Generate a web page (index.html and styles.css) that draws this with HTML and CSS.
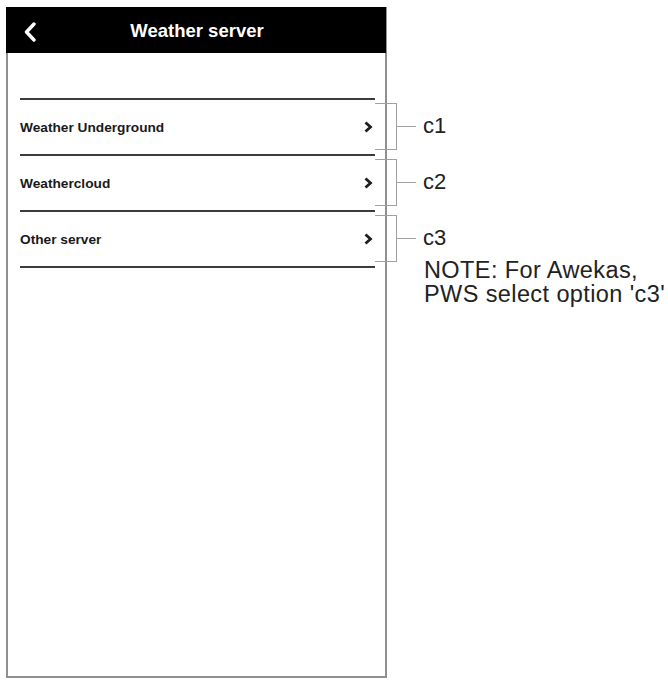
FILE: index.html
```html
<!DOCTYPE html>
<html>
<head>
<meta charset="utf-8">
<link rel="stylesheet" href="styles.css">
</head>
<body>
<div class="page">
  <div class="phone">
    <div class="header">
      <div class="back">
        <svg width="14" height="20" viewBox="0 0 14 20"><path d="M11 2 L3.5 10 L11 18" fill="none" stroke="#fff" stroke-width="3.4" stroke-linecap="round" stroke-linejoin="round"/></svg>
      </div>
      <div class="title">Weather server</div>
      <div></div>
    </div>
    <div class="list">
      <div class="row"><span>Weather Underground</span><svg class="chev" width="10" height="12" viewBox="0 0 10 12"><path d="M2.5 1.5 L7.5 6 L2.5 10.5" fill="none" stroke="#1e1e1e" stroke-width="2.8"/></svg></div>
      <div class="row"><span>Weathercloud</span><svg class="chev" width="10" height="12" viewBox="0 0 10 12"><path d="M2.5 1.5 L7.5 6 L2.5 10.5" fill="none" stroke="#1e1e1e" stroke-width="2.8"/></svg></div>
      <div class="row"><span>Other server</span><svg class="chev" width="10" height="12" viewBox="0 0 10 12"><path d="M2.5 1.5 L7.5 6 L2.5 10.5" fill="none" stroke="#1e1e1e" stroke-width="2.8"/></svg></div>
    </div>
  </div>
  <div class="notes">
    <div class="ann"><div class="bracket"></div><div class="tick"></div><div class="label">c1</div></div>
    <div class="ann"><div class="bracket"></div><div class="tick"></div><div class="label">c2</div></div>
    <div class="ann"><div class="bracket"></div><div class="tick"></div><div class="label">c3</div></div>
    <div class="note">NOTE: For Awekas,<br>PWS select option 'c3'</div>
  </div>
</div>
</body>
</html>
```

FILE: styles.css
```css
html, body {
  margin: 0;
  padding: 0;
  background: #fff;
}
body {
  font-family: "Liberation Sans", Arial, sans-serif;
  color: #1a1a1a;
}
.page {
  display: flex;
  align-items: flex-start;
  padding: 7px 0 0 6px;
}
.phone {
  width: 381px;
  height: 671px;
  box-sizing: border-box;
  border: 2px solid #909090;
  border-top: 0;
  flex: none;
  background: #fff;
}
.header {
  height: 46px;
  background: #000;
  margin: 0 -1px 0 -2px;
  display: grid;
  grid-template-columns: 1fr auto 1fr;
  align-items: center;
}
.back {
  padding-left: 17px;
  padding-top: 4px;
  display: flex;
  align-items: center;
}
.title {
  color: #fff;
  font-weight: bold;
  font-size: 18.5px;
  padding-top: 2px;
  padding-left: 2px;
}
.list {
  margin: 45px 10px 0 12px;
  border-bottom: 2px solid #3c3c3c;
}
.row {
  height: 56px;
  box-sizing: border-box;
  border-top: 2px solid #3c3c3c;
  display: flex;
  align-items: center;
  justify-content: space-between;
  padding-right: 2px;
  font-weight: bold;
  font-size: 13.7px;
}
.notes {
  margin-left: -12px;
  padding-top: 91px;
  display: flex;
  flex-direction: column;
}
.ann {
  height: 56px;
  display: flex;
  align-items: center;
}
.bracket {
  width: 22px;
  height: 47px;
  box-sizing: border-box;
  border: 1px solid #a0a0a0;
  border-left: 0;
}
.tick {
  width: 19px;
  height: 1px;
  background: #a0a0a0;
}
.label {
  margin-left: 7px;
  font-size: 22px;
  line-height: 24px;
  color: #222;
}
.note {
  margin: -8px 0 0 49px;
  font-size: 23.5px;
  letter-spacing: 0.4px;
  line-height: 24px;
  color: #222;
  white-space: nowrap;
}
```
